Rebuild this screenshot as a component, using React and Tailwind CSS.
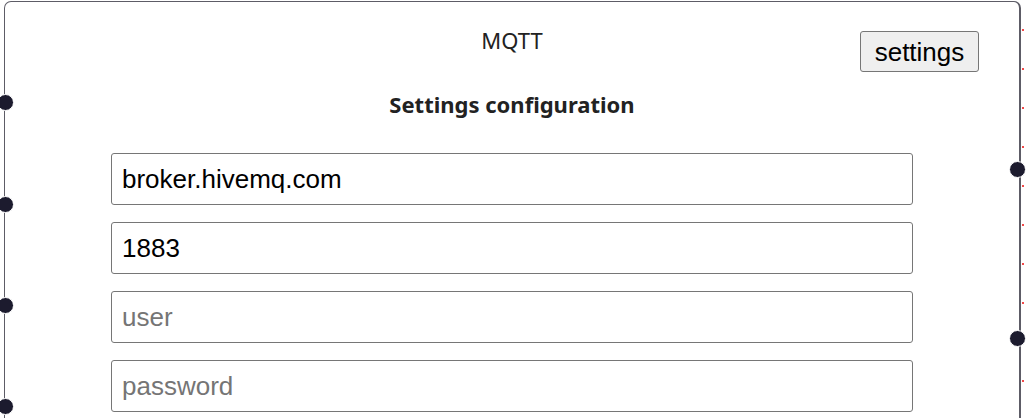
export default function App() {
  const leftDots = ["top-[94px]", "top-[196px]", "top-[297px]", "top-[398px]"];
  const rightDots = ["top-[161px]", "top-[330px]"];
  const redDots = Array.from({ length: 10 });

  return (
    <div className="relative flex h-[418px] w-[1027px] overflow-hidden bg-white">
      <div className="ml-[4px] mt-px h-[430px] w-[1017px] shrink-0 rounded-t-[7px] border border-r-2 border-b-0 border-[#5d5c66]">
        <div className="grid grid-cols-[1fr_auto_1fr] items-start">
          <div />
          <div
            className="pt-[24px] text-[22px] leading-[28px] text-[#222]"
            style={{ fontFamily: '"Noto Sans", "Open Sans", sans-serif' }}
          >
            MQTT
          </div>
          <div className="flex justify-end pr-[40px] pt-[29px]">
            <button
              className="h-[41px] w-[119px] rounded-[3px] border border-[#767676] bg-[#efefef] text-[26px] leading-none text-black"
              style={{ fontFamily: '"Liberation Sans", Arial, sans-serif' }}
            >
              settings
            </button>
          </div>
        </div>

        <h2
          className="mt-[17px] text-center text-[22px] font-bold leading-[30px] text-[#222]"
          style={{ fontFamily: '"Noto Sans", "Open Sans", sans-serif' }}
        >
          Settings configuration
        </h2>

        <div
          className="mt-[34px] flex flex-col gap-[17px] px-[106px]"
          style={{ fontFamily: '"Liberation Sans", Arial, sans-serif' }}
        >
          <input
            defaultValue="broker.hivemq.com"
            className="h-[52px] w-full rounded-[3px] border border-[#767676] px-[10px] text-[26px] text-black outline-none"
          />
          <input
            defaultValue="1883"
            className="h-[52px] w-full rounded-[3px] border border-[#767676] px-[10px] text-[26px] text-black outline-none"
          />
          <input
            placeholder="user"
            className="h-[52px] w-full rounded-[3px] border border-[#767676] px-[10px] text-[26px] text-black outline-none placeholder:text-[#757575]"
          />
          <input
            placeholder="password"
            className="h-[52px] w-full rounded-[3px] border border-[#767676] px-[10px] text-[26px] text-black outline-none placeholder:text-[#757575]"
          />
        </div>
      </div>

      <div className="ml-[1px] flex flex-col gap-[37px] pt-[29px]">
        {redDots.map((_, i) => (
          <span key={i} className="block h-[2px] w-[2px] bg-[#f04a4a]" />
        ))}
      </div>

      {leftDots.map((t) => (
        <span
          key={t}
          className={`absolute left-[-3px] ${t} h-[17px] w-[17px] rounded-full border border-white bg-[#1c1b2e]`}
        />
      ))}
      {rightDots.map((t) => (
        <span
          key={t}
          className={`absolute left-[1009px] ${t} h-[17px] w-[17px] rounded-full border border-white bg-[#1c1b2e]`}
        />
      ))}
    </div>
  );
}
